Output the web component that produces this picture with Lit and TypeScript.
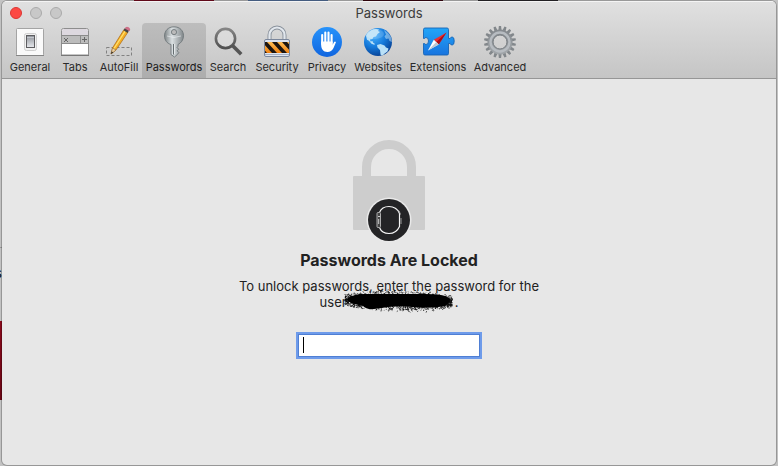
import { LitElement, html, css, svg } from "lit";
import { customElement, state } from "lit/decorators.js";
import { classMap } from "lit/directives/class-map.js";

const general = svg`
  <defs><linearGradient id="g1" x1="0" y1="0" x2="0" y2="1"><stop offset="0" stop-color="#8e9299"/><stop offset="1" stop-color="#e8eaee"/></linearGradient></defs>
  <rect x="2.5" y="2.5" width="27" height="27" rx="1" fill="#fafafa" stroke="#a4a4a4"/>
  <path d="M2 29.500h28" stroke="#858585"/>
  <rect x="10.500" y="7.500" width="12" height="17" rx="2" fill="#f1f1f1" stroke="#cfcfcf"/>
  <rect x="12.500" y="9.500" width="8" height="12" fill="url(#g1)" stroke="#5d5d60"/>
  <path d="M13 11.500h7" stroke="#c3c6cc"/>`;

const tabs = svg`
  <path d="M2.500 29V4.500q0-2 2-2h23q2 0 2 2V29z" fill="#fff" stroke="#8d8d8d"/>
  <path d="M3 9.500V5q0-2 2-2h22q2 0 2 2v4.500z" fill="#ddd8df"/>
  <rect x="3" y="10" width="26" height="7" fill="#bcbcbc"/>
  <path d="M2.500 9.500h27M2.500 17.500h27M21.500 10v7" stroke="#8b8b8b"/>
  <path d="M5 12l4 4M9 12l-4 4M23 13.500h5M25.500 11v5" stroke="#666"/>
  <path d="M2 29.500h28" stroke="#777"/>`;

const autofill = svg`
  <rect x="3.500" y="21.500" width="25" height="8" fill="none" stroke="#818181" stroke-dasharray="3 2"/>
  <path d="M8 28l1.500-6L21 3.500l4 2.600L13 24z" fill="#f4ae25" stroke="#a9660e" stroke-width=".7"/>
  <path d="M11 22.500L22.600 4.500" stroke="#ffe16e" stroke-width="1.300"/>
  <path d="M8 28l1.500-6 3.500 2z" fill="#edcfa0" stroke="#7b613d" stroke-width=".5"/>
  <path d="M8 28l.7-2.600 1.500.9z" fill="#222"/>
  <path d="M20.500 4.300l1.600-2.500 4 2.600-1.600 2.500z" fill="#454545"/>
  <path d="M21.700 2.500q1.500-3 4-1.200t.8 4z" fill="#ce6f87"/>`;

const key = svg`
  <defs><linearGradient id="k1"><stop offset="0" stop-color="#7f8587"/><stop offset=".4" stop-color="#d9dfe1"/><stop offset="1" stop-color="#82888b"/></linearGradient></defs>
  <path fill-rule="evenodd" d="M16 .8c6 0 9.500 4 9.500 9 0 4-2.500 7.400-5.500 8.700v1.800l-1 1 1.700 2-1.600 1.500 1.700 1.700-1.200 1.800L16.500 31 13 28.500V18.500C9 17.500 6.500 14 6.500 10 6.500 5 10 .8 16 .8zM16 3.500a2.600 2.600 0 1 0 0 5.200 2.600 2.600 0 0 0 0-5.200z" fill="url(#k1)" stroke="#6f777a" stroke-width=".9"/>
  <path d="M9 10q7 3 14 0" fill="none" stroke="#eef2f3" stroke-opacity=".6"/>
  <path d="M15.500 18v10.500" stroke="#656d70"/><path d="M16.600 18v10" stroke="#edf0f1" stroke-width=".8"/>`;

const search = svg`
  <defs><linearGradient id="s1" x1="0" y1="0" x2="0" y2="1"><stop offset="0" stop-color="#858585"/><stop offset="1" stop-color="#505050"/></linearGradient></defs>
  <circle cx="13.500" cy="12.500" r="9.600" fill="#e1e1e1" fill-opacity=".5" stroke="url(#s1)" stroke-width="2.600"/>
  <path d="M20.500 19.500l8.700 8.800" stroke="#555" stroke-width="3.600"/>`;

const security = svg`
  <defs><linearGradient id="l1" x1="0" y1="0" x2="0" y2="1"><stop offset="0" stop-color="#ffbd54"/><stop offset="1" stop-color="#ee8010"/></linearGradient><clipPath id="lc"><rect x="4" y="16" width="24" height="11"/></clipPath></defs>
  <path d="M8.500 14V9a7.500 7.500 0 0 1 15 0v5" fill="none" stroke="#8a929c" stroke-width="4"/>
  <path d="M8.500 14V9a7.500 7.500 0 0 1 15 0v5" fill="none" stroke="#e2e7ed" stroke-width="2.200"/>
  <rect x="3.500" y="13.500" width="25" height="17" rx="1.500" fill="#dce3ef" stroke="#7b879c"/>
  <rect x="4" y="16" width="24" height="11" fill="url(#l1)"/>
  <path clip-path="url(#lc)" d="M1 16h5l10 11h-5zM11 16h5l10 11h-5zM21 16h5l10 11h-5zM-9 16h5L6 27H1z" fill="#1c1510"/>
  <path d="M4 28.500h24" stroke="#a5b0c4"/>`;

const privacy = svg`
  <defs><linearGradient id="p1" x1="0" y1="0" x2="0" y2="1"><stop offset="0" stop-color="#2793fb"/><stop offset="1" stop-color="#1065df"/></linearGradient></defs>
  <circle cx="16" cy="16" r="15" fill="url(#p1)"/>
  <path d="M11.200 18V9M14.300 16V6.500M17.500 16V6.500M20.600 17V9" stroke="#fff" stroke-width="2.100" stroke-linecap="round"/>
  <path d="M10.150 15.500h11.500v3.200l1.300-2.500q1.100-1.600 2 0L22.500 22q-2 4-6 4c-4.500 0-6.350-3.500-6.350-7z" fill="#fff"/>`;

const globe = svg`
  <defs><radialGradient id="w1" cx=".35" cy=".25" r=".8"><stop offset="0" stop-color="#49b3ff"/><stop offset=".55" stop-color="#1478d9"/><stop offset="1" stop-color="#083f91"/></radialGradient><clipPath id="wc"><circle cx="16" cy="16" r="14"/></clipPath></defs>
  <circle cx="16" cy="16" r="14" fill="url(#w1)"/>
  <g clip-path="url(#wc)" fill="#b9e0f7">
  <path d="M4.500 8C7 5 10 3 14 3l3 .5-1 1.500 2 1-2.500 2-1.500 2.500-2.500.5-1 2-2.500.5.5 2 2-.5.500 1.500 2 1.500-.8.800-2.700-1-2.500-3-2-1L4 10z"/>
  <path d="M15 19l3.500-1 4 1.500 1.500 2 2.500 1-1 3-3.500 2.500-1.500 3-2-2.500-.5-4.500-2.500-2.500z"/>
  <path d="M22 4l4 3 3 4 1 5-2.500-1-1-2.500-2.500.5-1.500-2.500 1.500-2z" fill-opacity=".55"/></g>
  <ellipse cx="13" cy="8" rx="9" ry="5" fill="#fff" fill-opacity=".16"/>`;

const extensions = svg`
  <defs><linearGradient id="e1" x1="0" y1="0" x2="0" y2="1"><stop offset="0" stop-color="#22a5f8"/><stop offset="1" stop-color="#1874df"/></linearGradient></defs>
  <path d="M1.500 3.500q0-1.500 1.500-1.500h22q1.500 0 1.500 1.500v9h1.700q.3-1.500 2-1.500 2 0 2 4t-2 4q-1.700 0-2-1.500h-1.700v10q0 1.500-1.500 1.500H3q-1.500 0-1.500-1.500v-10h1q.4 1 1.500 1 2.500 0 2.500-3.500t-2.500-3.500q-1.100 0-1.500 1h-1z" fill="url(#e1)" stroke="#1765b5" stroke-width=".9"/>
  <path d="M24.500 6.500l-7.800 12-4.900-4.800z" fill="#ed2d31"/><path d="M24.500 6.500l-7.800 12-2.400-2.400z" fill="#a90f18"/>
  <path d="M6 24.500l5.800-10.800 4.900 4.800z" fill="#fff"/><path d="M6 24.500l8.300-8.400 2.400 2.400z" fill="#bdc8d3"/>`;

const teeth = Array.from({ length: 18 }, (_, i) => i * 20);
const gear = svg`
  <defs><linearGradient id="a1" x1="0" y1="0" x2="0" y2="1"><stop offset="0" stop-color="#868b90"/><stop offset="1" stop-color="#a0a5a9"/></linearGradient></defs>
  ${teeth.map((a) => svg`<path d="M14.300 5l.6-5h2.200l.6 5z" fill="#82878b" transform="rotate(${a} 16 16)"/>`)}
  <circle cx="16" cy="16" r="9.700" fill="none" stroke="url(#a1)" stroke-width="5.400"/>
  <circle cx="16" cy="16" r="9.500" fill="none" stroke="#b7bcc1" stroke-width="2.400"/>
  <circle cx="16" cy="16" r="7" fill="none" stroke="#757b80" stroke-width="1"/>`;

const panes = [
  { name: "General", icon: general },
  { name: "Tabs", icon: tabs },
  { name: "AutoFill", icon: autofill },
  { name: "Passwords", icon: key },
  { name: "Search", icon: search },
  { name: "Security", icon: security },
  { name: "Privacy", icon: privacy },
  { name: "Websites", icon: globe },
  { name: "Extensions", icon: extensions },
  { name: "Advanced", icon: gear },
];

// Short bristle marks around a solid core give the marker its rough edge.
function bristles(): string {
  let seed = 17;
  const rnd = () => (seed = (seed * 16807) % 2147483647) / 2147483647;
  let d = "";
  for (let i = 0; i < 2400; i++) {
    const x = 2 + rnd() * 107;
    const t = x / 112;
    const half = 10 * Math.pow(Math.sin(Math.PI * Math.min(0.95, Math.max(0.05, t))), 0.3);
    const y = 10 + t * 2 + (rnd() + rnd() - 1) * half * 1.1;
    d += `M${x.toFixed(1)} ${y.toFixed(1)}l${(rnd() * 2 - 1).toFixed(1)} ${(rnd() * 3 - 1.5).toFixed(1)}`;
  }
  return d;
}
const bristlePath = bristles();

@customElement("app-root")
export class AppRoot extends LitElement {
  @state() private selected = "Passwords";

  static styles = css`
    :host {
      display: flex;
      position: relative;
      box-sizing: border-box;
      min-height: 100vh;
      padding: 1px 2px;
      overflow: hidden;
      color: #222;
      font-family: Inter, "Liberation Sans", sans-serif;
      background:
        linear-gradient(90deg, #c4c4c4 134px, #7b0c20 134px 214px, #c4c4c4 214px 248px, #5877a4 248px 328px, #c4c4c4 328px 363px, #3b0410 363px 443px, #c4c4c4 443px 478px, #2c2a2d 478px 558px, #c4c4c4 558px) 0 0 / 100% 1px no-repeat,
        linear-gradient(#8b0a1c, #6b0615) 0 321px / 2px 79px no-repeat,
        linear-gradient(#999, #999) 0 247px / 2px 1px no-repeat,
        #c2c2c2;
    }
    .behind { position: absolute; left: -5px; top: 265px; font-size: 13px; line-height: 16px; color: #111; }
    .window {
      position: relative;
      flex: 1;
      display: flex;
      flex-direction: column;
      border-radius: 5px;
      overflow: hidden;
      background: #e7e7e7;
      box-shadow: 0 0 0 1px #00000038;
    }
    header {
      background: linear-gradient(#e0e0e0, #c5c5c5);
      border-top: 1px solid #f4f4f4;
      border-bottom: 1px solid #969696;
    }
    .titlebar {
      display: grid;
      grid-template-columns: 1fr auto 1fr;
      align-items: center;
      height: 21px;
    }
    .lights { display: flex; gap: 8px; padding-left: 8px; }
    .light {
      box-sizing: border-box;
      width: 12px;
      height: 12px;
      padding: 0;
      border: 1px solid #aaa;
      border-radius: 50%;
      background: #c8c8c8;
    }
    .close { background: #fc4944; border-color: #dc3632; }
    h1 { margin: 0; font-size: 13px; line-height: 20px; font-weight: 400; color: #3c3c3c; }
    .toolbar {
      display: grid;
      grid-template-columns: 48px 42px 46px 64px 44px 54px 46px 56px 64px 60px;
      padding-left: 4px;
    }
    .pane {
      display: flex;
      flex-direction: column;
      align-items: center;
      height: 55px;
      padding: 3px 0 0;
      border: 0;
      border-radius: 4px 4px 0 0;
      background: none;
      color: #2a2a2a;
      font: 11px/16px Inter, "Liberation Sans", sans-serif;
      white-space: nowrap;
    }
    .pane.on { background: linear-gradient(#bdbdbd, #adadad); color: #1c1c1c; }
    .icon { display: block; width: 32px; height: 32px; overflow: visible; flex: none; }
    .label { padding-top: 1px; }
    main {
      flex: 1;
      display: flex;
      flex-direction: column;
      align-items: center;
      padding: 60px 20px 20px;
      text-align: center;
    }
    .lock { width: 80px; height: 104px; display: block; }
    h2 { margin: 7px 0 0; font-size: 16px; line-height: 20px; font-weight: 700; }
    label { display: block; margin-top: 8px; font-size: 13px; line-height: 16px; }
    .redacted { display: inline-block; position: relative; width: 108px; height: 10px; }
    .marker { position: absolute; left: -4px; top: -7px; width: 112px; height: 22px; overflow: visible; }
    .field { position: relative; margin-top: 25px; }
    input {
      display: block;
      box-sizing: border-box;
      width: 180px;
      height: 21px;
      padding: 0 4px;
      border: 0;
      outline: 1px solid #4f7fd4;
      box-shadow: 0 0 0 3px #6e9bea;
      background: #fff;
      font: 13px/16px Inter, "Liberation Sans", sans-serif;
      caret-color: transparent;
    }
    .caret { position: absolute; left: 4px; top: 2px; width: 1px; height: 16px; background: #000; }
  `;

  render() {
    return html`
      <span class="behind" aria-hidden="true">s</span>
      <div class="window">
        <header>
          <div class="titlebar">
            <div class="lights">
              <button class="light close" aria-label="Close"></button>
              <button class="light" aria-label="Minimize" disabled></button>
              <button class="light" aria-label="Zoom" disabled></button>
            </div>
            <h1>Passwords</h1>
          </div>
          <nav class="toolbar">
            ${panes.map(
              (p) => html`<button class=${classMap({ pane: true, on: p.name === this.selected })} @click=${() => (this.selected = p.name)}>
                <svg class="icon" viewBox="0 0 32 32" aria-hidden="true">${p.icon}</svg>
                <span class="label">${p.name}</span>
              </button>`
            )}
          </nav>
        </header>
        <main>
          <svg class="lock" viewBox="0 0 80 104" aria-hidden="true">
            <path d="M17.500 38V28a22.500 22.500 0 0 1 45 0V38" fill="none" stroke="#cdcdcd" stroke-width="9"/>
            <rect x="4" y="37" width="72" height="54" rx="1" fill="#cdcdcd"/>
            <circle cx="40" cy="81" r="22.500" fill="#e9e9e9"/>
            <circle cx="40" cy="81" r="21" fill="#242426"/>
            <path d="M30.500 73.500C32 69.500 35.500 67.500 40 67.500s8.500 2.500 10.500 7v13c-2 4.500-6 7-10.500 7s-8-2-9.500-6" fill="none" stroke="#f4f4f4" stroke-width="1.200"/>
            <path d="M47 69.500q4 2 4.500 6M52 79v6" fill="none" stroke="#bbb" stroke-width=".8"/>
            <rect x="28" y="73.500" width="3.500" height="15" rx="1" fill="#444" stroke="#bcbcbc" stroke-width=".9"/>
            <path d="M29 77.500h2M29.700 80v5" stroke="#eee" stroke-width=".8"/>
          </svg>
          <h2>Passwords Are Locked</h2>
          <label for="password">To unlock passwords, enter the password for the<br />user<span class="redacted"><svg class="marker" viewBox="0 0 112 22" aria-hidden="true">
              <path d="M4 9Q10 4 22 4T50 4 82 4 102 6L108 9 102 16Q88 19 70 17T38 18 20 16L8 13z" fill="#000"/>
              <path d=${bristlePath} fill="none" stroke="#000" stroke-width=".9" stroke-opacity=".85"/>
            </svg></span>.</label>
          <div class="field">
            <input id="password" type="password" />
            <span class="caret"></span>
          </div>
        </main>
      </div>
    `;
  }
}
